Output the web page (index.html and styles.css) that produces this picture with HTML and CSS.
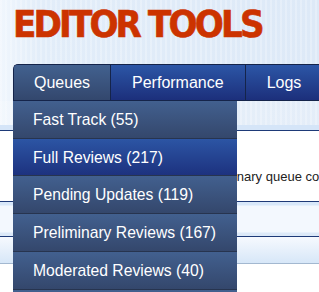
FILE: index.html
```html
<!DOCTYPE html>
<html lang="en">
<head>
    <meta charset="UTF-8">
    <title>Editor Tools</title>
    <link rel="stylesheet" href="styles.css">
</head>
<body>
    <h1 class="title">EDITOR TOOLS</h1>

    <div class="wrap">
        <ul class="tabs">
            <li class="tab active">Queues</li>
            <li class="tab">Performance</li>
            <li class="tab">Logs</li>
        </ul>

        <ul class="dropdown">
            <li class="item">Fast Track (55)</li>
            <li class="item current">Full Reviews (217)</li>
            <li class="item">Pending Updates (119)</li>
            <li class="item">Preliminary Reviews (167)</li>
            <li class="item">Moderated Reviews (40)</li>
            <li class="item"></li>
        </ul>

        <div class="subbar"></div>

        <div class="content">
            <p class="note">Add-ons waiting in the preliminary queue count here.</p>

            <div class="panel">
                <div class="panel-head"></div>
                <div class="panel-foot"></div>
            </div>
        </div>
    </div>
</body>
</html>
```

FILE: styles.css
```css
html {
    overflow: hidden;
}

body {
    margin: 0;
    font-family: "Liberation Sans", Arial, sans-serif;
    background-color: #dde9f7;
    background-image:
        repeating-linear-gradient(90deg, rgba(255, 255, 255, 0.25) 0 2px, rgba(255, 255, 255, 0) 2px 5px),
        linear-gradient(90deg, #f0f6fd 0, #e2edf9 40px, #dde9f7 100%);
    height: 292px;
    overflow: hidden;
}

.title {
    margin: 0;
    padding: 2px 0 0 13px;
    height: 60px;
    box-sizing: border-box;
    font-family: "DejaVu Sans", sans-serif;
    font-stretch: condensed;
    font-weight: bold;
    font-size: 38px;
    letter-spacing: -2.85px;
    color: #cc3300;
    line-height: 44px;
    -webkit-text-stroke: 0.6px #cc3300;
}

.wrap {
    position: relative;
    margin-top: 4px;
    padding-left: 13px;
}

.tabs {
    list-style: none;
    margin: 0;
    padding: 0;
    display: flex;
    height: 37px;
    box-sizing: border-box;
    border: 1px solid #15244a;
    border-right: 0;
    border-radius: 5px 0 0 0;
    overflow: hidden;
    background: linear-gradient(#2c56a6, #1c2f7b);
}

.tab {
    padding: 1px 21px 0;
    line-height: 34px;
    font-size: 16px;
    color: #fff;
    white-space: nowrap;
    border-left: 1px solid #15244a;
}

.tab:first-child {
    padding: 1px 20px 0;
    border-left: 0;
}

.tab.active {
    background: linear-gradient(#42618f, #33476d);
}

.subbar {
    height: 29px;
    border-bottom: 1px solid #1e3a78;
    background: linear-gradient(rgba(255, 255, 255, 0.2) 0, rgba(255, 255, 255, 0.2) 82%, #d5e5f8 83%, #d5e5f8 100%);
    margin-left: -13px;
}

.content {
    background: #fff;
    margin-left: -13px;
    padding-top: 37px;
    height: 200px;
}

.note {
    margin: 0 0 16px;
    padding-left: 67px;
    font-size: 13px;
    line-height: 17px;
    color: #222;
    white-space: nowrap;
}

.panel-head {
    height: 34px;
    border-top: 1px solid #1e3a78;
    border-bottom: 1px solid #1e3a78;
    background: linear-gradient(#d8e8fa 0, #d8e8fa 3px, #f3f8fe 4px, #f3f8fe 30px, #dce9f8 31px);
}

.panel-foot {
    height: 26px;
    border-bottom: 1px solid #a3b8d0;
    background: linear-gradient(#f6f9fe, #d7e7f8);
}

.dropdown {
    position: absolute;
    top: 37px;
    left: 13px;
    width: 224px;
    list-style: none;
    margin: 0;
    padding: 0;
    z-index: 2;
}

.item {
    height: 37px;
    line-height: 38px;
    padding-left: 20px;
    font-size: 15.7px;
    color: #fff;
    white-space: nowrap;
    border-bottom: 1px solid #27344f;
    background: linear-gradient(#42608f, #34476c);
}

.item.current {
    height: 36px;
    line-height: 37px;
    background: linear-gradient(#2c55a4, #1d327f);
}
```
